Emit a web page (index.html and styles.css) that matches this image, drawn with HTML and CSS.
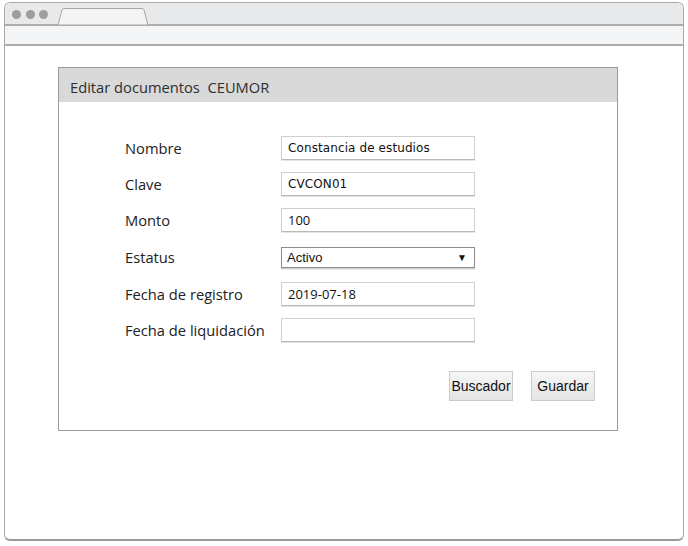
FILE: index.html
```html
<!DOCTYPE html>
<html lang="es">
<head>
<meta charset="utf-8">
<title>Editar documentos CEUMOR</title>
<link rel="stylesheet" href="styles.css">
</head>
<body>
<div class="window">
  <div class="titlebar">
    <div class="dots"><span class="dot"></span><span class="dot"></span><span class="dot"></span></div>
    <svg class="tab" width="92" height="17" viewBox="0 0 92 17">
      <path d="M1 17 L5 2 Q5.5 0.5 7 0.5 L85 0.5 Q86.5 0.5 87 2 L91 17 Z" fill="#f4f4f5" stroke="#a8a8a8" stroke-width="1"/>
    </svg>
  </div>
  <div class="addressbar"></div>
  <div class="content">
    <div class="panel">
      <div class="panel-header">Editar documentos&nbsp; CEUMOR</div>
      <div class="form">
        <div class="row">
          <span class="label">Nombre</span>
          <div class="field comic">Constancia de estudios</div>
        </div>
        <div class="row">
          <span class="label">Clave</span>
          <div class="field comic">CVCON01</div>
        </div>
        <div class="row">
          <span class="label">Monto</span>
          <div class="field plain">100</div>
        </div>
        <div class="row row-select">
          <span class="label">Estatus</span>
          <div class="select"><span>Activo</span><span class="arrow">▼</span></div>
        </div>
        <div class="row">
          <span class="label">Fecha de registro</span>
          <div class="field plain">2019-07-18</div>
        </div>
        <div class="row">
          <span class="label">Fecha de liquidación</span>
          <div class="field plain"></div>
        </div>
        <div class="actions">
          <button class="btn">Buscador</button>
          <button class="btn">Guardar</button>
        </div>
      </div>
    </div>
  </div>
</div>
</body>
</html>
```
FILE: styles.css
```css
html, body {
  margin: 0;
  padding: 0;
  background: #ffffff;
}

.window {
  margin: 2px 0 0 4px;
  width: 680px;
  height: 539px;
  box-sizing: border-box;
  border: 1.5px solid #a9a9a9;
  border-bottom: 2px solid #9a9a9a;
  border-radius: 6px;
  overflow: hidden;
  display: flex;
  flex-direction: column;
  background: #fff;
}

.titlebar {
  height: 21px;
  background: #e8e9ea;
  border-bottom: 2px solid #aeaeae;
  display: flex;
  align-items: flex-end;
  padding-left: 7px;
  flex-shrink: 0;
}

.dots {
  display: flex;
  gap: 4.5px;
  align-self: center;
  margin-top: 2px;
}

.dot {
  width: 9px;
  height: 9px;
  border-radius: 50%;
  background: #9d9d9d;
}

.tab {
  display: block;
  margin-left: 9px;
  margin-bottom: -1px;
}

.addressbar {
  height: 18px;
  background: #f4f5f6;
  border-bottom: 2px solid #aeaeae;
  flex-shrink: 0;
}

.content {
  padding: 21px 0 0 53px;
}

.panel {
  width: 560px;
  height: 364px;
  box-sizing: border-box;
  border: 1px solid #9a9a9a;
}

.panel-header {
  height: 34px;
  background: #d9d9d9;
  padding-left: 11px;
  font-family: "Open Sans", "Noto Sans", sans-serif;
  font-size: 14.7px;
  line-height: 38px;
  color: #2e2e2e;
}

.form {
  padding: 34px 22px 0 66px;
  display: flex;
  flex-direction: column;
  gap: 12px;
}

.row {
  display: flex;
  align-items: center;
  height: 24px;
}

.row-select {
  height: 26px;
}

.label {
  width: 156px;
  font-family: "Open Sans", "Noto Sans", sans-serif;
  font-size: 14.7px;
  color: #222;
}

.field {
  width: 194px;
  height: 24px;
  box-sizing: border-box;
  border: 1px solid #cfcfcf;
  border-bottom: 1px solid #b8b8b8;
  box-shadow: 0 1px 0 #e4e4e4;
  padding: 0 6px;
  line-height: 22px;
  color: #111;
  background: #fff;
}

.comic {
  font-family: "DejaVu Sans", sans-serif;
  font-size: 12px;
  letter-spacing: 0.1px;
}

.plain {
  font-family: "Open Sans", "Noto Sans", sans-serif;
  font-size: 13px;
}

.select {
  width: 194px;
  height: 21px;
  align-self: flex-start;
  margin-top: 3px;
  box-sizing: border-box;
  border: 1px solid #8c8c8c;
  box-shadow: 0 1px 0 #cfcfcf, 0 2px 0 #ececec;
  padding: 0 7px 0 5px;
  display: flex;
  justify-content: space-between;
  align-items: center;
  font-family: "Liberation Sans", Arial, sans-serif;
  font-size: 13px;
  color: #111;
}

.arrow {
  font-size: 10px;
  color: #111;
}

.actions {
  display: flex;
  justify-content: flex-end;
  gap: 18px;
  margin-top: 17px;
}

.btn {
  width: 64px;
  height: 30px;
  box-sizing: border-box;
  border: 1px solid #cbcbcb;
  background: linear-gradient(#f6f6f6, #e4e4e4);
  font-family: "Liberation Sans", Arial, sans-serif;
  font-size: 14px;
  color: #111;
  padding: 0;
  margin: 0;
}
```
